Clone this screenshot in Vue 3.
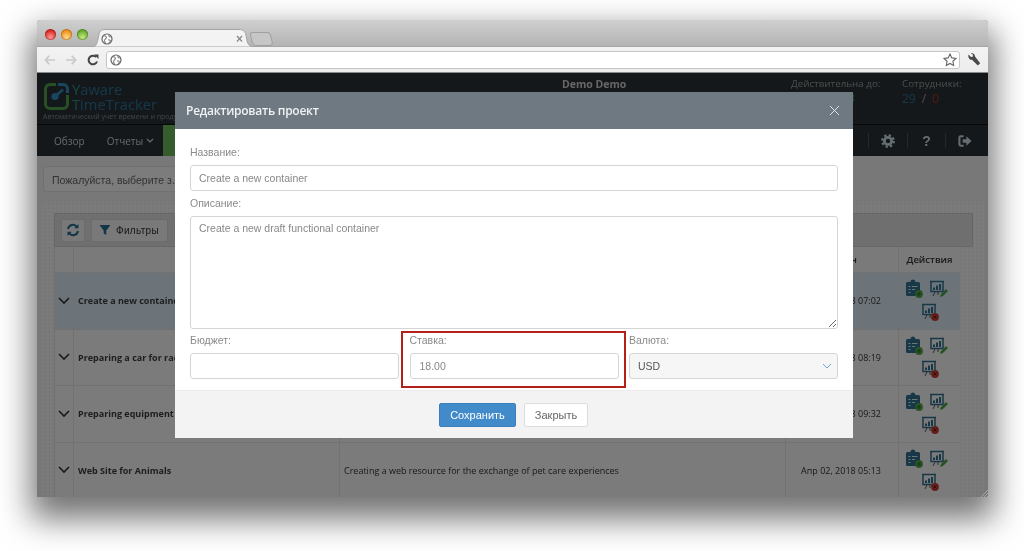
<script setup>
const rows = [
  { name: 'Create a new container', desc: 'Create a new draft functional container', date: 'Апр 02, 2018 07:02', active: true },
  { name: 'Preparing a car for race', desc: 'Preparing a car for race and service', date: 'Апр 02, 2018 08:19' },
  { name: 'Preparing equipment', desc: 'Preparing equipment for the next season', date: 'Апр 02, 2018 09:32' },
  { name: 'Web Site for Animals', desc: 'Creating a web resource for the exchange of pet care experiences', date: 'Апр 02, 2018 05:13' }
]
</script>

<template>
  <div class="page">
    <div class="window">
      <div class="tabbar">
        <div class="lights"><i class="red"></i><i class="amber"></i><i class="green"></i></div>
        <div class="tab">
          <svg class="tabshape" viewBox="0 0 160 18"><path d="M0 18C3 17.500 4 15 5 10L6 5C7 1.500 9 .5 12 .5H146C150 .5 152 2 153 6L154 12C155 16 157 17.500 160 18Z" fill="#f3f3f3" stroke="#a4a4a4"/></svg>
          <svg class="globe" viewBox="0 0 12 12"><circle cx="6" cy="6" r="5" fill="#fff" stroke="#666" stroke-width="1.2"/><path d="M3 2.500c2 .5 3 1.500 2 3-1 1-2 1-1.500 2.500l1 2M8 2c-.5 1 .5 2 1.500 2M7 7c1-.5 2.500 0 2.500 1l-1.500 2" fill="none" stroke="#888" stroke-width="1.200"/></svg>
          <span class="tabclose">×</span>
        </div>
        <div class="newtab"></div>
      </div>
      <div class="toolbar">
        <svg class="nav-icon" viewBox="0 0 14 12"><path d="M6 1 1.500 6 6 11M2 6h11" fill="none" stroke="#c9c9c9" stroke-width="2"/></svg>
        <svg class="nav-icon" viewBox="0 0 14 12"><path d="M8 1l4.500 5L8 11M12 6H1" fill="none" stroke="#c9c9c9" stroke-width="2"/></svg>
        <svg class="nav-icon reload" viewBox="0 0 12 12"><path d="M10 7.500A4.300 4.300 0 1 1 9 3" fill="none" stroke="#444" stroke-width="2"/><path d="M7 .5h4.500V5z" fill="#444"/></svg>
        <div class="url">
          <svg class="globe" viewBox="0 0 12 12"><circle cx="6" cy="6" r="5" fill="#fff" stroke="#666" stroke-width="1.2"/><path d="M3 2.500c2 .5 3 1.500 2 3-1 1-2 1-1.500 2.500l1 2M8 2c-.5 1 .5 2 1.500 2M7 7c1-.5 2.500 0 2.500 1l-1.500 2" fill="none" stroke="#888" stroke-width="1.200"/></svg>
          <svg class="star" viewBox="0 0 14 14"><path d="M7 1l1.800 3.900 4.200.5-3.100 2.900.8 4.200L7 10.400l-3.700 2.100.8-4.200L1 5.400l4.200-.5z" fill="#fff" stroke="#666" stroke-width="1.100"/></svg>
        </div>
        <svg class="wrench" viewBox="0 0 14 14"><path d="M1.500 1.500 4 4l1.800-.3L6 1.800 3.800.4C6 -.3 8 1 8 3.500l5.200 6.700-2.400 2.300L5 6.800C2.600 7 .7 4.500 1.500 1.500z" fill="#4a4a4a"/></svg>
      </div>

      <div class="app">
        <header class="brandbar">
          <div class="brand">
            <div class="brandrow">
              <svg class="logo" viewBox="0 0 28 30"><path d="M13 3.500H7A4.500 4.500 0 0 0 2.500 8v15A4.500 4.500 0 0 0 7 27.500h13a4.500 4.500 0 0 0 4.500-4.500v-9" fill="none" stroke="#4fa349" stroke-width="3"/><path d="M15 3.500h5A4.500 4.500 0 0 1 24.500 8v4" fill="none" stroke="#2f8fc2" stroke-width="3"/><circle cx="12" cy="15.500" r="3.600" fill="#2f8fc2"/><path d="M12 15.500l8-7" stroke="#2f8fc2" stroke-width="2.400"/></svg>
              <div class="brandname"><span><b>Y</b>aware</span><span><b>T</b>imeTracker</span></div>
            </div>
            <div class="tagline">Автоматический учет времени и продуктивности</div>
          </div>
          <div class="user">Demo Demo</div>
          <div class="stat valid">Действительна до:<em>Апр 30, 2018</em></div>
          <div class="stat staff">Сотрудники:<div class="count"><span class="blue">29</span><span class="sl">/</span><span class="redtxt">0</span></div></div>
        </header>
        <nav class="mainnav">
          <span class="item first">Обзор</span>
          <span class="item">Отчеты <svg class="caret" viewBox="0 0 8 5"><path d="M1 1l3 3 3-3" fill="none" stroke="#cfd8dc" stroke-width="1.200"/></svg></span>
          <span class="activeitem">Проекты</span>
          <div class="navicons">
            <span class="cell"><svg viewBox="0 0 14 14"><path d="M3 13c0-3 1-4 4-4s4 1 4 4z" fill="#c8dbe4"/><circle cx="7" cy="5" r="3" fill="#c8dbe4"/></svg></span>
            <span class="cell"><svg viewBox="0 0 14 14"><circle cx="7" cy="7" r="3.600" fill="none" stroke="#c8dbe4" stroke-width="2.800"/><circle cx="7" cy="7" r="5.800" fill="none" stroke="#c8dbe4" stroke-width="2.200" stroke-dasharray="2.300 2.250"/></svg></span>
            <span class="cell qmark">?</span>
            <span class="cell"><svg viewBox="0 0 15 14"><path d="M6 2H3a1.500 1.500 0 0 0-1.500 1.500v7A1.500 1.500 0 0 0 3 12h3" fill="none" stroke="#c8dbe4" stroke-width="2.200"/><path d="M9 2l5.500 5L9 12V9H5V5h4z" fill="#c8dbe4"/></svg></span>
          </div>
        </nav>

        <main class="content">
          <div class="search">Пожалуйста, выберите з…</div>
          <section class="panel">
            <div class="ptools">
              <button class="tbtn square"><svg viewBox="0 0 14 14"><path d="M2 6a5 5 0 0 1 9-2" fill="none" stroke="#236d92" stroke-width="2"/><path d="M12.500 1v4.200H8.300z" fill="#236d92"/><path d="M12 8a5 5 0 0 1-9 2" fill="none" stroke="#236d92" stroke-width="2"/><path d="M1.500 13V8.800h4.200z" fill="#236d92"/></svg></button>
              <button class="tbtn filter"><svg viewBox="0 0 12 12"><path d="M.5 1h11L7.300 6.500V11L4.700 9.500v-3z" fill="#236d92"/></svg>Фильтры</button>
              <button class="tbtn">Колонки</button>
            </div>
            <div class="tablegrid">
              <div class="th"></div>
              <div class="th"></div>
              <div class="th"></div>
              <div class="th updated">Обновлен</div>
              <div class="th center">Действия</div>
              <template v-for="r in rows" :key="r.name">
                <div class="td" :class="{ on: r.active }"><svg class="chev" viewBox="0 0 12 8"><path d="M1 1l5 5 5-5" fill="none" stroke="#333" stroke-width="1.600"/></svg></div>
                <div class="td name" :class="{ on: r.active }">{{ r.name }}</div>
                <div class="td desc" :class="{ on: r.active }">{{ r.desc }}</div>
                <div class="td date" :class="{ on: r.active }">{{ r.date }}</div>
                <div class="td actions" :class="{ on: r.active }">
                  <svg viewBox="0 0 20 20"><path d="M3.500 3H6.500a2.500 2.500 0 0 1 5 0h3A1.500 1.500 0 0 1 16 4.500V17H3.500A1.500 1.500 0 0 1 2 15.500v-11A1.500 1.500 0 0 1 3.500 3z" fill="#33708f"/><path d="M4.500 7.500h2M8 7.500h5.500M4.500 10.500h2M8 10.500h3M4.500 13.500h2" stroke="#dfe8ec" stroke-width="1.200"/><circle cx="15" cy="15" r="3.900" fill="#4fa548"/><path d="M13 15h4M15 13v4" stroke="#2c6a24" stroke-width="1"/></svg>
                  <svg viewBox="0 0 20 20"><path d="M2 2.500h14M3 3v9.500h12V3" fill="none" stroke="#33708f" stroke-width="1.500"/><path d="M6 11V8.500M9 11V6.500M12 11V5" stroke="#33708f" stroke-width="2"/><path d="M7 13l-2 4M10 13v3" stroke="#555" stroke-width="1"/><path d="M12 18l1-3 5-5 2 2-5 5z" fill="#4fa548"/></svg>
                  <svg viewBox="0 0 20 20"><path d="M2 2.500h14M3 3v9.500h12V3" fill="none" stroke="#33708f" stroke-width="1.500"/><path d="M6 11V8.500M9 11V6.500M12 11V5" stroke="#33708f" stroke-width="2"/><path d="M7 13l-2 4M10 13v3" stroke="#555" stroke-width="1"/><circle cx="15" cy="15" r="3.900" fill="#c93d33"/><path d="M13.500 13.500l3 3M16.500 13.500l-3 3" stroke="#7c1711" stroke-width="1"/></svg>
                </div>
              </template>
            </div>
          </section>
        </main>

        <div class="overlay"></div>
        <svg class="grip" viewBox="0 0 8 8"><path d="M1 8l7-7M4 8l4-4M7 8l1-1" stroke="#a8a8a8" stroke-width="1"/></svg>

        <div class="modal">
          <div class="mhead">
            <h2>Редактировать проект</h2>
            <svg class="mclose" viewBox="0 0 11 11"><path d="M1 1l9 9M10 1l-9 9" stroke="#e8ecee" stroke-width=".9"/></svg>
          </div>
          <div class="mbody">
            <label class="lab first">Название:</label>
            <input class="ctl" value="Create a new container" readonly />
            <label class="lab second">Описание:</label>
            <textarea class="ctl area" readonly>Create a new draft functional container</textarea>
            <div class="trio">
              <div class="field"><label class="lab">Бюджет:</label><input class="ctl" readonly /></div>
              <div class="field marked"><label class="lab">Ставка:</label><input class="ctl wide" value="18.00" readonly /></div>
              <div class="field">
                <label class="lab">Валюта:</label>
                <div class="selectbox">USD<svg viewBox="0 0 10 6"><path d="M1 1l4 4 4-4" fill="none" stroke="#6ea6d8" stroke-width="1"/></svg></div>
              </div>
            </div>
          </div>
          <div class="mfoot">
            <button class="btn save">Сохранить</button>
            <button class="btn close">Закрыть</button>
          </div>
        </div>
      </div>
    </div>
  </div>
</template>

<style>
html, body { margin: 0; background: #fff; }
</style>

<style scoped>
.page { width: 1024px; height: 551px; box-sizing: border-box; padding: 20px 36px 54px 37px; overflow: hidden; background: #fff; font-family: "Liberation Sans", Arial, sans-serif; filter: blur(.35px); }
.window { height: 477px; display: flex; flex-direction: column; border-radius: 4px 4px 0 0; box-shadow: 0 16px 32px 6px rgba(0,0,0,.55); background: #777; overflow: hidden; }
.tabbar { height: 27px; flex: none; box-sizing: border-box; padding: 9px 0 0 8px; display: flex; align-items: flex-start; background: linear-gradient(#cfcfcf, #b4b4b4); border-bottom: 1px solid #a5a5a5; }
.lights { display: flex; gap: 5px; width: 48px; }
.lights i { width: 11px; height: 11px; border-radius: 50%; box-shadow: inset 0 0 0 1px rgba(0,0,0,.2); }
.lights .red { background: radial-gradient(circle at 50% 75%, #ff9a96, #d9241f 70%); }
.lights .amber { background: radial-gradient(circle at 50% 75%, #ffd98a, #ee8c16 70%); }
.lights .green { background: radial-gradient(circle at 50% 75%, #c4ec80, #62a82a 70%); }
.tab { width: 160px; height: 18px; box-sizing: border-box; position: relative; z-index: 1; display: flex; align-items: center; justify-content: space-between; padding: 2px 10px 0 8px; }
.tabshape { position: absolute; left: 0; top: 0; width: 160px; height: 18px; }
.globe { width: 12px; height: 12px; flex: none; position: relative; }
.tabclose { position: relative; color: #8a8a8a; font-size: 12px; font-weight: bold; line-height: 12px; }
.newtab { width: 19px; height: 12px; margin: 3px 0 0 -2px; background: #c6c6c6; border: 1px solid #a0a0a0; border-radius: 3px 3px 4px 4px; transform: skewX(14deg); }
.toolbar { height: 26px; flex: none; box-sizing: border-box; display: flex; align-items: center; padding: 0 6px 0 7px; background: linear-gradient(#f3f3f3, #ececec); border-bottom: 1px solid #8a8a8a; }
.nav-icon { width: 12px; height: 10px; margin-right: 9px; }
.nav-icon.reload { width: 12px; height: 12px; margin-right: 7px; margin-left: 1px; }
.url { flex: 1; height: 18px; box-sizing: border-box; margin-right: 7px; display: flex; align-items: center; justify-content: space-between; padding: 0 2px 0 3px; background: #fff; border: 1px solid #c6c6c6; border-radius: 3px; }
.star { width: 14px; height: 14px; }
.wrench { width: 14px; height: 14px; margin-right: 1px; }
.app { flex: 1; position: relative; overflow: hidden; min-height: 0; }
.brandbar { height: 52px; box-sizing: border-box; display: flex; background: #2b3135; color: #c5cccf; border-bottom: 1px solid #111; }
.brand { width: 390px; padding: 8px 0 0 6px; box-sizing: border-box; overflow: hidden; }
.brandrow { display: flex; gap: 1px; }
.logo { width: 28px; height: 30px; flex: none; }
.brandname { display: flex; flex-direction: column; padding-top: 1px; font-family: "Open Sans", sans-serif; font-size: 14.700px; line-height: 14.500px; color: #2a7096; }
.brandname b { font-weight: 400; color: #2f8f88; }
.tagline { font-size: 7px; line-height: 9px; color: #888; font-family: "Open Sans", sans-serif; white-space: nowrap; margin-top: 1px; }
.user { width: 364px; box-sizing: border-box; padding: 4px 0 0 135px; font: 700 10.500px "Open Sans", sans-serif; color: #ccc; white-space: nowrap; }
.stat { font: 400 9.800px/14px "Open Sans", sans-serif; color: #999; padding-top: 4px; white-space: nowrap; }
.stat em { display: block; font-style: normal; color: #4f9d3f; font-size: 10.500px; }
.valid { width: 111px; }
.count { font-size: 12px; line-height: 15px; display: flex; gap: 6px; }
.blue { color: #2a7096; }
.redtxt { color: #b52c24; }
.sl { color: #999; }
.mainnav { height: 31px; display: flex; align-items: center; background: #2b3135; color: #c5d2d8; font: 400 10px "Open Sans", sans-serif; }
.item.first { margin-left: 17px; margin-right: 22px; }
.item { display: flex; align-items: center; gap: 3px; }
.caret { width: 8px; height: 5px; }
.activeitem { margin-left: 9px; height: 31px; box-sizing: border-box; padding: 9px 20px; background: #6cb65a; color: #fff; }
.navicons { margin-left: auto; display: flex; height: 100%; align-items: center; padding-right: 4px; }
.cell { width: 38.600px; height: 15px; display: flex; align-items: center; justify-content: center; border-left: 1px solid #4a5257; box-sizing: border-box; }
.cell:first-child { border-left: 0; }
.cell svg { width: 14px; height: 14px; }
.qmark { font: 700 14px "Liberation Sans", sans-serif; color: #c8dbe4; }
.content { height: 341px; box-sizing: border-box; padding: 10px 3px 0 6px; background: #f0f0f0; overflow: hidden; }
.search { width: 200px; height: 26px; box-sizing: border-box; padding: 7px 8px; font-size: 10.500px; line-height: 12px; color: #666; background: #f8f8f8; border: 1px solid #e0e0e0; border-radius: 3px; white-space: nowrap; overflow: hidden; }
.panel { margin-top: 10px; height: 320px; box-sizing: border-box; padding: 11px 12px 0 11px; background: #f7f7f7; background-image: radial-gradient(#ededed 1px, transparent 1px); background-size: 4px 4px; }
.ptools { height: 34px; box-sizing: border-box; display: flex; align-items: center; gap: 6px; padding-left: 6px; background: #dedede; border: 1px solid #cfcfcf; }
.tbtn { height: 23px; box-sizing: border-box; display: flex; align-items: center; gap: 5px; padding: 0 7px; background: #f2f2f2; border: 1px solid #d6d6d6; border-radius: 2px; font: 400 10px "Liberation Sans", sans-serif; letter-spacing: .3px; color: #333; }
.tbtn svg { width: 12px; height: 12px; }
.tbtn.square { width: 24px; padding: 0 4px; }
.tbtn.square svg { width: 14px; height: 14px; }
.tbtn.filter { width: 77px; }
.tablegrid { display: grid; grid-template-columns: 19px 266px 446px 113px 62px; grid-template-rows: 26px repeat(4, 56.500px); width: 906px; }
.th, .td { border-left: 1px solid #e2e2e2; border-bottom: 1px solid #e2e2e2; box-sizing: border-box; display: flex; align-items: center; font-family: "Open Sans", sans-serif; color: #333; min-width: 0; }
.th { font-size: 9.500px; font-weight: 600; background: #f4f4f4; }
.th.center { justify-content: center; }
.th.updated { justify-content: flex-end; padding-right: 41px; }
.td { font-size: 9px; background: #f6f6f6; }
.td.on { background: #d8e8f2; }
.chev { width: 12px; height: 8px; margin-left: 3px; }
.name { font-weight: 700; padding-left: 4px; white-space: nowrap; overflow: hidden; color: #3c3c3c; }
.desc { padding-left: 4px; white-space: nowrap; overflow: hidden; }
.date { justify-content: center; font-size: 9px; padding-right: 2px; }
.actions { display: flex; flex-wrap: wrap; justify-content: center; align-content: center; gap: 3px 4px; padding: 0 8px 0 0; }
.actions svg { width: 20px; height: 20px; }
.actions svg:last-child { margin-left: 8px; }
.overlay { position: absolute; inset: 0; background: rgba(0,0,0,.5); }
.grip { position: absolute; right: 0; bottom: 0; width: 8px; height: 8px; }
.modal { position: absolute; left: 138px; top: 19px; width: 678px; height: 346px; display: flex; flex-direction: column; background: #fff; }
.mhead { height: 37px; flex: none; box-sizing: border-box; display: flex; align-items: center; justify-content: space-between; padding: 0 13px 0 11px; background: #6e7981; }
.mhead h2 { margin: 0; font: 600 12px "Open Sans", sans-serif; letter-spacing: -.25px; color: #f0f2f3; }
.mclose { width: 11px; height: 11px; }
.mbody { flex: 1; box-sizing: border-box; padding: 0 15px; display: flex; flex-direction: column; }
.lab { display: block; font-size: 10.500px; line-height: 12px; margin-bottom: 7px; color: #8a8a8a; }
.lab.first { margin-top: 17px; }
.lab.second { margin-top: 6px; }
.ctl { display: block; width: 100%; height: 26px; box-sizing: border-box; margin: 0; padding: 0 8px; font: 400 10.500px "Liberation Sans", sans-serif; color: #888; background: #fff; border: 1px solid #d5d5d5; border-radius: 3px; outline: none; }
.ctl.wide { padding-left: 9px; }
.ctl.area { height: 113px; padding: 5px 8px; resize: vertical; line-height: 13px; }
.trio { display: grid; grid-template-columns: 209px 209px 209px; column-gap: 10.500px; margin-top: 2px; }
.field { min-width: 0; padding-top: 3px; }
.field.marked { position: relative; }
.field.marked::after { content: ""; position: absolute; left: -9px; right: -7px; top: 0; height: 57px; border: 2px solid #b3201a; box-sizing: border-box; }
.selectbox { height: 26px; box-sizing: border-box; display: flex; align-items: center; justify-content: space-between; padding: 0 5px 0 8px; font-size: 10.500px; color: #555; background: #f6f6f6; border: 1px solid #d5d5d5; border-radius: 3px; }
.selectbox svg { width: 10px; height: 6px; }
.mfoot { height: 48px; flex: none; box-sizing: border-box; display: flex; justify-content: center; align-items: center; gap: 8px; padding-right: 1px; background: #f3f3f3; border-top: 1px solid #ececec; }
.btn { height: 24px; box-sizing: border-box; padding: 0; border-radius: 2px; font: 400 11px "Liberation Sans", sans-serif; }
.save { width: 77px; background: #428bca; border: 1px solid #3a7fbb; color: #fff; }
.close { width: 64px; background: #fff; border: 1px solid #ddd; color: #666; }
</style>
